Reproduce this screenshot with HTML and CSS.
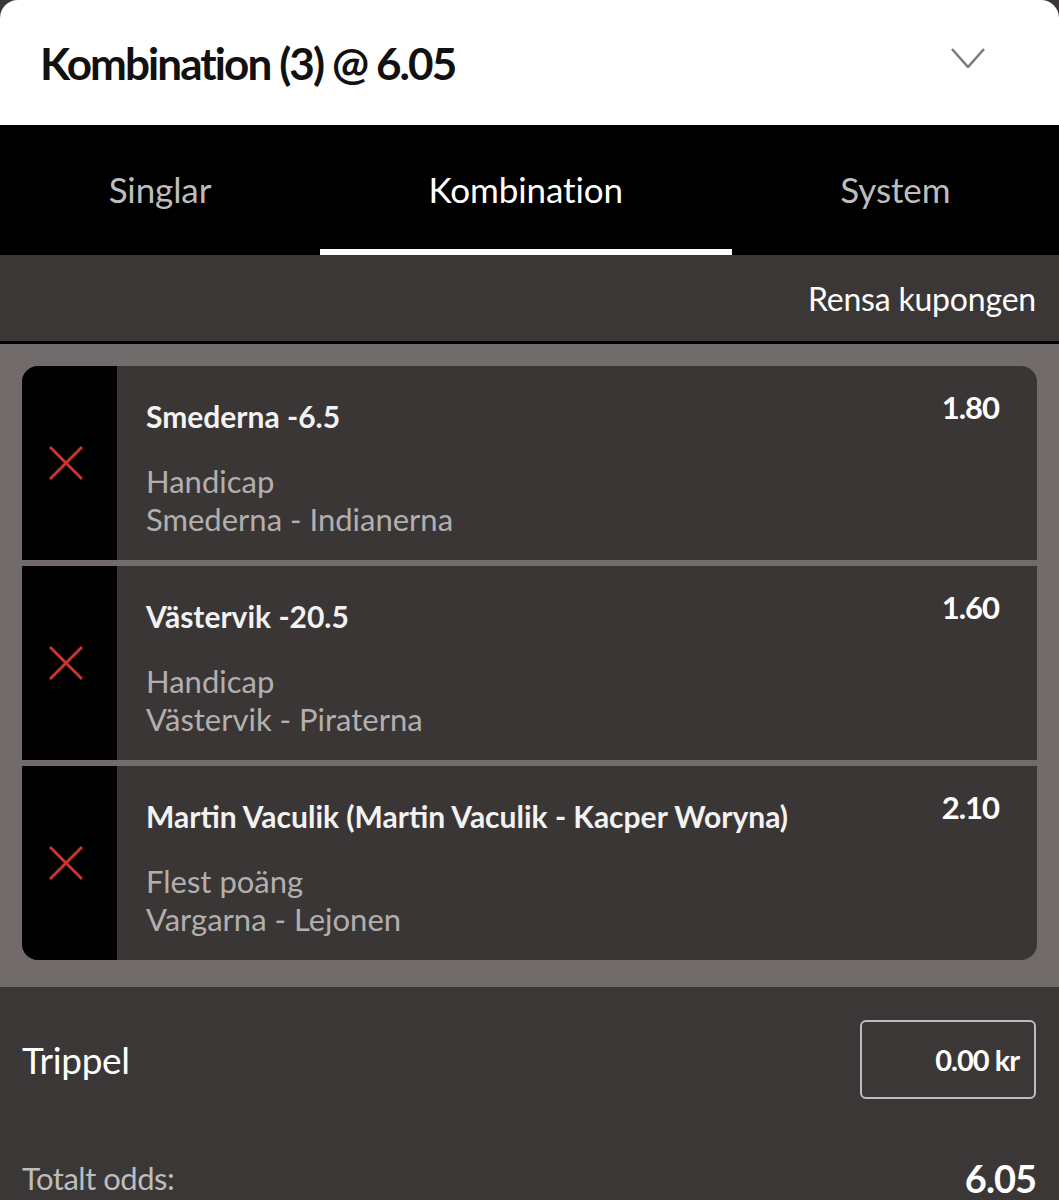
FILE: index.html
```html
<!DOCTYPE html>
<html lang="sv">
<head>
    <meta charset="UTF-8">
    <meta name="viewport" content="width=device-width, initial-scale=1.0">
    <title>Kupong</title>
    <link rel="stylesheet" href="styles.css">
</head>
<body>

    <!-- Coupon header -->
    <div class="coupon-header">
        <h1>Kombination (3) @ 6.05</h1>
        <svg class="chevron" width="34" height="20" viewBox="0 0 34 20">
            <polyline points="1,1 17,19 33,1" fill="none" stroke="#7a7a7a" stroke-width="2.5"/>
        </svg>
    </div>

    <!-- Bet type tabs -->
    <div class="tabs">
        <div class="tab">Singlar</div>
        <div class="tab active">Kombination</div>
        <div class="tab">System</div>
    </div>

    <div class="clear-bar">
        <span>Rensa kupongen</span>
    </div>

    <!-- Selections -->
    <div class="selections">
        <div class="cards">
            <div class="card">
                <div class="remove">
                    <svg width="36" height="36" viewBox="0 0 36 36">
                        <path d="M2 2 L34 34 M34 2 L2 34" stroke="#c8362f" stroke-width="3"/>
                    </svg>
                </div>
                <div class="card-body">
                    <div class="card-top">
                        <span class="pick">Smederna -6.5</span>
                        <span class="odds">1.80</span>
                    </div>
                    <div class="market">Handicap</div>
                    <div class="market">Smederna - Indianerna</div>
                </div>
            </div>
            <div class="card">
                <div class="remove">
                    <svg width="36" height="36" viewBox="0 0 36 36">
                        <path d="M2 2 L34 34 M34 2 L2 34" stroke="#c8362f" stroke-width="3"/>
                    </svg>
                </div>
                <div class="card-body">
                    <div class="card-top">
                        <span class="pick">Västervik -20.5</span>
                        <span class="odds">1.60</span>
                    </div>
                    <div class="market">Handicap</div>
                    <div class="market">Västervik - Piraterna</div>
                </div>
            </div>
            <div class="card">
                <div class="remove">
                    <svg width="36" height="36" viewBox="0 0 36 36">
                        <path d="M2 2 L34 34 M34 2 L2 34" stroke="#c8362f" stroke-width="3"/>
                    </svg>
                </div>
                <div class="card-body">
                    <div class="card-top">
                        <span class="pick">Martin Vaculik (Martin Vaculik - Kacper Woryna)</span>
                        <span class="odds">2.10</span>
                    </div>
                    <div class="market">Flest poäng</div>
                    <div class="market">Vargarna - Lejonen</div>
                </div>
            </div>
        </div>
    </div>

    <!-- Stake -->
    <div class="stake">
        <div class="stake-row">
            <span class="stake-label">Trippel</span>
            <div class="stake-input">0.00 kr</div>
        </div>
        <div class="total-row">
            <span class="total-label">Totalt odds:</span>
            <span class="total-value">6.05</span>
        </div>
    </div>

</body>
</html>
```

FILE: styles.css
```css
body {
    margin: 0;
    font-family: Lato, "Open Sans", sans-serif;
    background-color: #3b3736;
    color: #ffffff;
}

/* Header */
.coupon-header {
    height: 125px;
    background-color: #ffffff;
    border-radius: 18px 18px 0 0;
    display: flex;
    align-items: center;
    justify-content: space-between;
    padding: 0 74px 0 40px;
}

.coupon-header h1 {
    margin: 0;
    color: #111111;
    font-size: 44px;
    font-weight: 700;
    letter-spacing: -1.9px;
}

.chevron {
    margin-top: -10px;
}

/* Tabs */
.tabs {
    display: flex;
    height: 130px;
    background-color: #000000;
}

.tab {
    flex: auto;
    display: flex;
    align-items: center;
    justify-content: center;
    font-size: 35px;
    color: #bdbdbd;
    letter-spacing: -0.1px;
    border-bottom: 6px solid transparent;
    padding-top: 4px;
}

.tab.active {
    color: #ffffff;
    border-bottom-color: #ffffff;
}

.clear-bar {
    height: 86px;
    display: flex;
    align-items: center;
    justify-content: flex-end;
    padding-right: 23px;
    font-size: 32px;
    border-bottom: 3px solid #000000;
    letter-spacing: -0.2px;
}

/* Selections */
.selections {
    background-color: #716c6b;
    padding: 22px 22px 27px;
}

.cards {
    display: flex;
    flex-direction: column;
    gap: 6px;
    border-radius: 16px;
    overflow: hidden;
}

.card {
    display: flex;
    height: 194px;
    background-color: #3a3635;
}

.remove {
    width: 95px;
    flex-shrink: 0;
    box-sizing: border-box;
    padding-right: 7px;
    background-color: #000000;
    display: flex;
    align-items: center;
    justify-content: center;
}

.card-body {
    flex: 1;
    padding: 32px 38px 0 29px;
}

.card-top {
    display: flex;
    justify-content: space-between;
    align-items: flex-start;
    margin-bottom: 28px;
}

.pick {
    font-size: 30px;
    font-weight: 700;
    line-height: 36px;
    color: #f2f2f2;
}

.odds {
    font-size: 31px;
    font-weight: 700;
    line-height: 36px;
    margin-top: -9px;
    letter-spacing: -1px;
}

.market {
    font-size: 31px;
    line-height: 38px;
    color: #b3afae;
}

/* Stake */
.stake {
    padding: 33px 23px 0 22px;
}

.stake-row {
    display: flex;
    justify-content: space-between;
    align-items: center;
}

.stake-label {
    font-size: 37px;
    letter-spacing: -0.3px;
}

.stake-input {
    width: 176px;
    height: 79px;
    box-sizing: border-box;
    border: 2px solid #bdbdbd;
    border-radius: 6px;
    display: flex;
    align-items: center;
    justify-content: flex-end;
    padding-right: 15px;
    font-size: 29px;
    font-weight: 700;
    letter-spacing: -1px;
}

.total-row {
    display: flex;
    justify-content: space-between;
    align-items: center;
    margin-top: 56px;
    line-height: 46px;
}

.total-label {
    font-size: 31px;
    color: #bdbdbd;
    letter-spacing: -0.5px;
}

.total-value {
    font-size: 38px;
    font-weight: 700;
    letter-spacing: -1px;
}
```
